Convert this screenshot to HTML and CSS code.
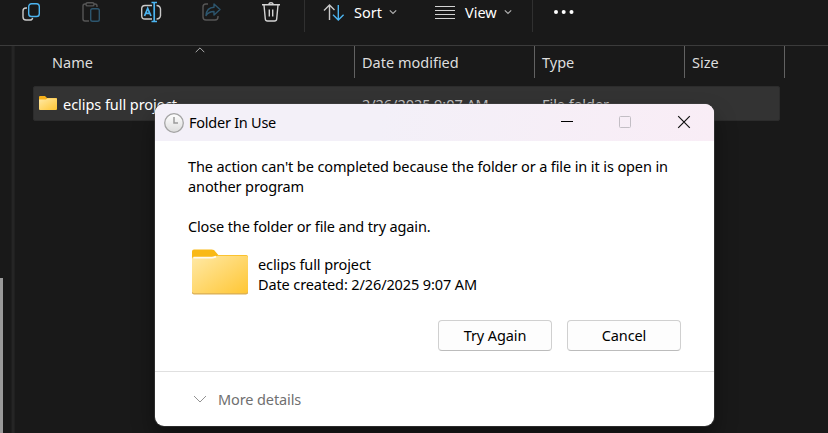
FILE: index.html
```html
<!DOCTYPE html>
<html lang="en">
<head>
<meta charset="utf-8">
<title>File Explorer</title>
<link rel="stylesheet" href="styles.css">
</head>
<body>
<div class="explorer">
  <div class="toolbar">
    <div class="tools">
      <svg class="tool" viewBox="0 0 24 24"><path d="M8 8H7a3 3 0 0 0-3 3v6a3 3 0 0 0 3 3h4q2.300 0 2.600-2.200" stroke="#c9c9c9"/><rect x="9.700" y="3.700" width="10.600" height="12.800" rx="2.800" stroke="#4cb4f0"/></svg>
      <svg class="tool" viewBox="0 0 24 24"><path d="M10 21H6a2 2 0 0 1-2-2V6a2 2 0 0 1 2-2h1M15 4h1a2 2 0 0 1 2 2v1" stroke="#565656"/><rect x="7" y="2.700" width="8" height="3.200" rx="1.500" stroke="#565656"/><rect x="11.700" y="8.700" width="8.600" height="12.600" rx="1.800" stroke="#2d566e"/></svg>
      <svg class="tool" viewBox="0 0 24 24"><path d="M13 5.500H6a3.300 3.300 0 0 0-3.300 3.300v6.900A3.300 3.300 0 0 0 6 19h7M17.500 5.500a4 4 0 0 1 4 3.300v6.900a4 4 0 0 1-4 3.300" stroke="#c9c9c9"/><path d="M12.500 2.500h5.500M12.500 21.500h5.500M15.200 2.500v19" stroke="#4cb4f0" stroke-width="1.700"/><path d="M5.500 16 8.700 8.500 12 16M6.700 13.300h4" stroke="#4cb4f0" stroke-width="1.700"/></svg>
      <svg class="tool" viewBox="0 0 24 24"><path d="M9 4H7a3 3 0 0 0-3 3v10a3 3 0 0 0 3 3h9a3 3 0 0 0 3-3v-1" stroke="#565656"/><path d="M15 4l6 5.500-6 5.500v-3.500c-3.500 0-6 1-8 4 .4-5 3-8 8-8.200z" stroke="#2d566e" stroke-linejoin="round"/></svg>
      <svg class="tool" viewBox="0 0 24 24"><path d="M3 4.700h18M9.700 4.500a2.400 2.400 0 0 1 4.600 0M5 5l1.300 14a2.200 2.200 0 0 0 2.200 2h7a2.200 2.200 0 0 0 2.200-2L19 5M10.300 9.500v7M13.700 9.500v7" stroke="#d4d4d4"/></svg>
    </div>
    <div class="menus">
      <div class="menu sort">
        <svg class="menu-icon" viewBox="0 0 22 20"><path d="M6.500 18V3M1 8.500 6.500 3l5 5" stroke="#c9c9c9"/><path d="M15.300 3v15M10 12.800l5.300 5.300 5.300-5.300" stroke="#4cb4f0"/></svg>
        <span>Sort</span>
        <svg class="chev" viewBox="0 0 8 8"><path d="M.8 2.300 4 5.500l3.200-3.200"/></svg>
      </div>
      <div class="menu view">
        <svg class="menu-icon" viewBox="0 0 22 20"><path d="M1 4.500h20M1 8.500h20M1 12.500h20M1 16.500h20" stroke="#d4d4d4" stroke-width="1.200"/></svg>
        <span>View</span>
        <svg class="chev" viewBox="0 0 8 8"><path d="M.8 2.300 4 5.500l3.200-3.200"/></svg>
      </div>
    </div>
    <svg class="more" viewBox="0 0 22 6"><circle cx="3" cy="3" r="2"/><circle cx="10.700" cy="3" r="2"/><circle cx="18.500" cy="3" r="2"/></svg>
  </div>
  <div class="content">
    <div class="nav"><div class="thumb"></div></div>
    <div class="splitter"></div>
    <div class="files">
      <div class="columns">
        <div class="name"><span>Name</span><svg class="ascending" viewBox="0 0 10 6"><path d="M.7 5.200 5 .9l4.300 4.300"/></svg></div>
        <div><span>Date modified</span></div>
        <div><span>Type</span></div>
        <div><span>Size</span></div>
      </div>
      <div class="row">
        <div class="file">
          <svg class="folder-small" viewBox="0 0 18 14"><path d="M0 1a1 1 0 0 1 1-1h5l2 2h9a1 1 0 0 1 1 1v5H0z" fill="#f5b019"/><path d="M0 3.500h7L8.500 2.300H17a1 1 0 0 1 1 1V13a1 1 0 0 1-1 1H1a1 1 0 0 1-1-1z" fill="url(#face)"/></svg>
          <span>eclips full project</span>
        </div>
        <span class="dim">2/26/2025 9:07 AM</span>
        <span class="dim">File folder</span>
      </div>
    </div>
  </div>
</div>
<div class="dialog">
  <div class="titlebar">
    <svg class="clock" viewBox="0 0 20 20"><defs><linearGradient id="dial" x2="0" y2="1"><stop stop-color="#fff"/><stop offset="1" stop-color="#dcdcdc"/></linearGradient></defs><circle cx="10" cy="10" r="9.300" fill="url(#dial)" stroke="#a4a4a4" stroke-width="1.300"/><path d="M10 4v6h4" fill="none" stroke="#9b9b9b" stroke-width="1.500"/></svg>
    <span class="title">Folder In Use</span>
    <div class="controls">
      <svg viewBox="0 0 14 14"><path d="M1 6.500h12" stroke="#000"/></svg>
      <svg viewBox="0 0 14 14"><rect x="1.500" y="1.500" width="11" height="11" rx="1" stroke="#c3bec5"/></svg>
      <svg viewBox="0 0 14 14"><path d="M1.200 1.200l11.600 11.600M12.800 1.200 1.200 12.800" stroke="#111" stroke-width="1.200"/></svg>
    </div>
  </div>
  <div class="body">
    <p><span>The action can't be completed because the folder or a file in it is open in</span><br><span>another program</span></p>
    <p class="hint"><span>Close the folder or file and try again.</span></p>
    <div class="item">
      <svg class="folder" viewBox="0 0 56 46"><defs><linearGradient id="face" x1="0" y1="0" x2="1" y2="1"><stop stop-color="#ffe9a6"/><stop offset="1" stop-color="#ffc633"/></linearGradient></defs><path d="M0 2.500A2 2 0 0 1 2 .5h17.500c2 0 3 .8 4 2.200L26.300 6H54a2 2 0 0 1 2 2v12H0z" fill="#f9b916"/><path d="M0 10a2 2 0 0 1 2-2h18c2.500 0 3.500-1.300 6-1.300h28A2 2 0 0 1 56 8.700V43a2 2 0 0 1-2 2H2a2 2 0 0 1-2-2z" fill="url(#face)"/><path d="M1.500 8.600H20c1.500 0 2.500-.4 4-1" fill="none" stroke="#fffaf0" stroke-width="1.800"/><path d="M.2 43.300Q.6 44.800 2 44.800h52q1.400 0 1.800-1.500" fill="none" stroke="#d9ad55" stroke-width="1.200"/></svg>
      <div><span>eclips full project</span><br><span>Date created: 2/26/2025 9:07 AM</span></div>
    </div>
    <div class="buttons"><button>Try Again</button><button>Cancel</button></div>
  </div>
  <div class="details"><svg viewBox="0 0 14 8"><path d="M1 1l6 6 6-6"/></svg><span>More details</span></div>
</div>
</body>
</html>
```
FILE: styles.css
```css
* { box-sizing: border-box; }
body { margin: 0; width: 828px; height: 433px; overflow: hidden; position: relative; background: #191919; color: #fff; font: 14.500px/20px "Noto Sans", "Open Sans", sans-serif; }
span { white-space: nowrap; }
svg { display: block; flex: none; fill: none; }
.explorer { height: 433px; display: flex; flex-direction: column; }
.toolbar { height: 46px; flex: none; border-bottom: 1px solid #3b3b3b; display: flex; align-items: flex-start; }
.tools { display: flex; gap: 36px; width: 305px; height: 32px; padding-left: 19px; border-right: 1px solid #303030; }
.tool { width: 24px; height: 24px; stroke-width: 1.400; }
.menus { display: flex; width: 228px; height: 32px; padding-left: 18px; border-right: 1px solid #303030; }
.menu { display: flex; align-items: center; height: 25px; width: 110px; }
.menu-icon { width: 22px; height: 20px; margin-right: 9px; stroke-width: 1.400; margin-top: -1px; }
.menu span { width: 35px; margin-top: -2px; }
.view { padding-left: 2px; width: 99px; }
.view .menu-icon { margin: -1px 9px 0 -2px; }
.view .menu-icon { margin-left: 0; margin-right: 9px; }
.view span { width: 39px; }
.sort { flex: none; width: 109px; }
.chev { width: 8px; height: 8px; stroke: #b0b0b0; stroke-width: 1.200; margin-top: -1px; }
.more { width: 22px; height: 6px; margin: 9px 0 0 20px; fill: #fff; }
.content { flex: 1; display: flex; }
.nav { width: 11px; padding-top: 232px; }
.thumb { width: 3px; height: 155px; background: #9a9a9a; }
.splitter { width: 4px; background: #252525; border-left: 1px solid #1e1e1e; border-right: 1px solid #202020; }
.files { flex: 1; }
.columns { display: grid; grid-template-columns: 340px 180px 150px 100px; height: 32px; color: #dedede; }
.columns > div { border-right: 1px solid #626262; padding: 6px 0 0 7px; }
.columns .name { padding-left: 37px; display: flex; align-items: flex-start; }
.ascending { width: 10px; height: 6px; margin: -5px 0 0 102px; stroke: #aaa; }
.row { width: 747px; height: 35px; margin: 8px 0 0 18px; background: #333; border: 1px solid #2c2c2c; border-radius: 2px; display: grid; grid-template-columns: 328px 180px 1fr; padding-top: 7px; letter-spacing: -.05px; }
.file { display: flex; padding-left: 5px; }
.folder-small { width: 18px; height: 14px; margin: 2px 6px 0 0; }
.dim { color: #c4c4c4; }
.dialog { position: absolute; left: 155px; top: 104px; width: 559px; height: 322px; border-radius: 9px; overflow: hidden; background: #fff; color: #000; box-shadow: 0 0 0 1px #4448, 0 12px 22px #0006; letter-spacing: -.11px; }
.titlebar { height: 37px; display: flex; align-items: center; background: linear-gradient(100deg, #f3f0f8 40%, #f9edf6); padding-left: 9px; }
.clock { width: 20px; height: 20px; margin-right: 5px; }
.title { margin-top: -2px; letter-spacing: -.25px; }
.controls { display: flex; gap: 45px; margin: -1px 23px 0 auto; }
.controls svg { width: 14px; height: 14px; }
.controls svg:first-child { margin-right: -1px; }
.body { height: 230px; padding: 15px 33px 0; }
p { margin: 0 0 20px; }
.hint { letter-spacing: -.14px; }
.item { display: flex; gap: 10px; margin: -7px 0 0 4px; height: 46px; }
.item div { padding-top: 5px; }
.folder { width: 56px; height: 46px; }
.buttons { display: flex; justify-content: flex-end; gap: 15px; margin-top: 25px; }
button { width: 114px; height: 31px; padding: 0 0 2px; border: 1px solid #d0d0d0; border-bottom-color: #bcbcbc; border-radius: 4px; background: #fdfdfd; color: #000; font: inherit; letter-spacing: -.1px; }
.details { height: 55px; border-top: 1px solid #e0e0e0; display: flex; align-items: center; gap: 11px; padding-left: 38px; color: #707070; }
.details svg { width: 14px; height: 8px; stroke: #929292; }
```
